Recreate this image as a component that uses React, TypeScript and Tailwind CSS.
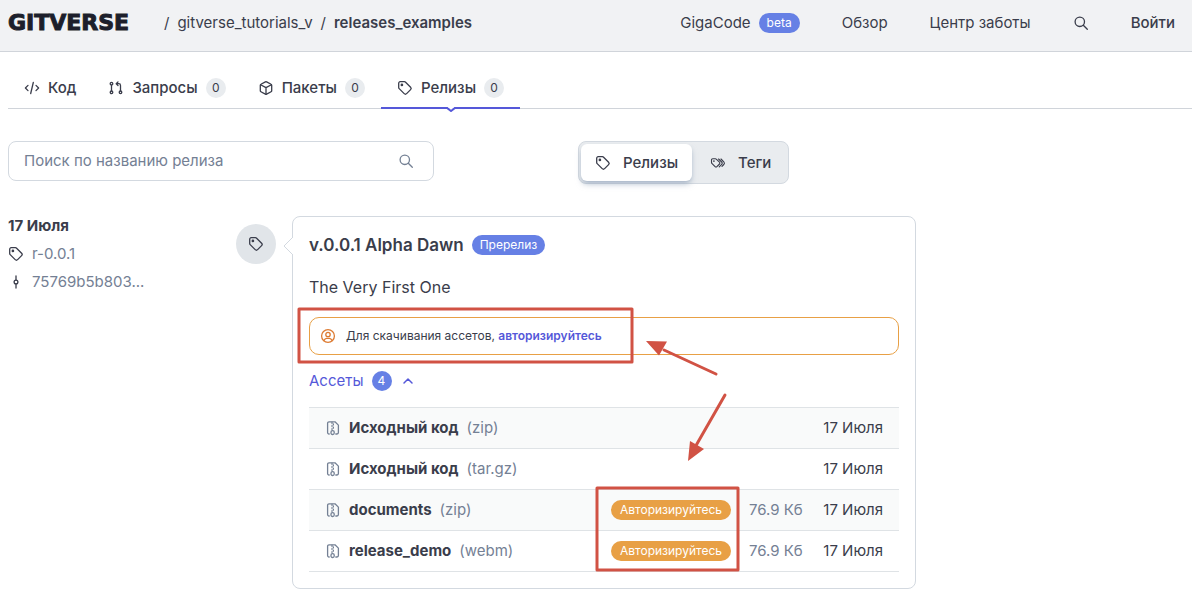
import type { ReactNode } from "react";

type IconProps = { className?: string; children?: ReactNode };

const Icon = ({ className = "size-4", children }: IconProps) => (
  <svg
    className={`${className} shrink-0`}
    viewBox="0 0 16 16"
    fill="none"
    stroke="currentColor"
    strokeWidth="1.3"
    strokeLinecap="round"
    strokeLinejoin="round"
    aria-hidden="true"
  >
    {children}
  </svg>
);

const TagIcon = () => (
  <Icon>
    <path d="M1.700 3.200c0-.9.7-1.500 1.500-1.500h4.200c.5 0 .9.2 1.200.5l5 5c.7.7.7 1.700 0 2.400l-4 4c-.7.7-1.700.7-2.400 0l-5-5a1.700 1.700 0 0 1-.5-1.200Z" />
    <circle cx="4.900" cy="4.900" r=".7" fill="currentColor" />
  </Icon>
);

const TagsIcon = () => (
  <Icon>
    <g strokeWidth="1.1">
      <path d="M1.500 5c0-.6.5-1.200 1.200-1.200h2.700c.4 0 .8.2 1.100.5l3 2.900c.5.5.5 1.300 0 1.800l-2.600 2.600c-.5.5-1.300.5-1.800 0l-3-3a1.700 1.700 0 0 1-.6-1.200Z" />
      <path d="m8.600 4 3.100 3c.7.7.7 1.600 0 2.300l-2.500 2.600M11 4l2.800 2.900c.8.8.8 1.800 0 2.600L12 11.400" />
      <circle cx="3.900" cy="6.100" r=".3" fill="currentColor" />
    </g>
  </Icon>
);

const CodeIcon = () => (
  <Icon>
    <path d="M4 5.400 1.400 8 4 10.600M12 5.400 14.600 8 12 10.600M9.300 2.500 6.700 13.500" />
  </Icon>
);

const PullIcon = () => (
  <Icon>
    <circle cx="3.500" cy="3.700" r="1.300" />
    <circle cx="3.500" cy="12.300" r="1.300" />
    <circle cx="12.500" cy="12.300" r="1.300" />
    <path d="M3.500 5.200v5.600M12.500 10.800V5.500c0-1.200-.6-1.800-1.700-1.800H8.800M10 1.900 8.200 3.700 10 5.500" />
  </Icon>
);

const PackageIcon = () => (
  <Icon>
    <path d="M7.400 1.900c.4-.2.800-.2 1.200 0l4.500 2.400c.4.200.6.600.6 1v5.400c0 .4-.2.8-.6 1l-4.500 2.400c-.4.200-.8.200-1.200 0l-4.500-2.400c-.4-.2-.6-.6-.6-1V5.300c0-.4.2-.8.6-1Z" />
    <path d="M2.600 4.700 8 7.600l5.400-2.900M8 7.600v6.500" />
  </Icon>
);

const SearchIcon = () => (
  <Icon>
    <circle cx="6.800" cy="6.800" r="4.700" />
    <path d="m10.300 10.300 4 4" />
  </Icon>
);

const CommitIcon = () => (
  <Icon>
    <circle cx="8" cy="8" r="1.900" />
    <path d="M8 2v4M8 10v4" />
  </Icon>
);

const UserIcon = () => (
  <Icon>
    <circle cx="8" cy="8" r="6.400" />
    <circle cx="8" cy="6.500" r="2.200" />
    <path d="M3.900 12.600c.7-1.500 1.600-2.200 2.700-2.200h2.800c1.100 0 2 .7 2.700 2.200" />
  </Icon>
);

const ZipIcon = () => (
  <Icon>
    <path
      d="M4.200 14H4c-.8 0-1.400-.6-1.400-1.400V3.200c0-.8.6-1.400 1.400-1.400h6l3.400 3.300v7.500c0 .8-.6 1.400-1.400 1.400h-1.200"
      strokeWidth="1.300"
    />
    <path
      d="M7 2.200v1.200M8.400 3.800V5M7 5.400v1.200M8.400 7v1.200M7 8.600v1"
      strokeWidth="1.200"
    />
    <rect x="6" y="10.600" width="3.200" height="3.900" rx="1.500" />
  </Icon>
);

const ChevronIcon = () => (
  <Icon>
    <path d="m4 10 4-4 4 4" strokeWidth="1.500" />
  </Icon>
);

const tabs = [
  { title: "Код", icon: <CodeIcon /> },
  { title: "Запросы", icon: <PullIcon />, count: 0 },
  { title: "Пакеты", icon: <PackageIcon />, count: 0 },
  { title: "Релизы", icon: <TagIcon />, count: 0, active: true },
];

const assets = [
  { name: "Исходный код", type: "zip", date: "17 Июля" },
  { name: "Исходный код", type: "tar.gz", date: "17 Июля" },
  { name: "documents", type: "zip", size: "76.9 Кб", date: "17 Июля" },
  { name: "release_demo", type: "webm", size: "76.9 Кб", date: "17 Июля" },
];

const Header = () => (
  <header className="flex items-center justify-between border-b border-[#d0d4da] bg-[#f1f2f4] pt-[11px] pr-[17px] pb-4 pl-2">
    <div className="flex items-center gap-2">
      <a
        href="#"
        className="w-[148px] font-['DejaVu_Sans',sans-serif] text-[22px] leading-6 font-bold text-[#1d1f2b] [-webkit-text-stroke:1px_#1d1f2b]"
      >
        GITVERSE
      </a>
      <span>/</span>
      <a href="#">gitverse_tutorials_v</a>
      <span>/</span>
      <a href="#" className="font-semibold">
        releases_examples
      </a>
    </div>
    <nav className="flex items-center gap-[42px]">
      <a href="#" className="flex items-center gap-2">
        GigaCode
        <span className="rounded-full bg-[#6680e5] px-2 text-xs leading-5 text-white">
          beta
        </span>
      </a>
      <a href="#">Обзор</a>
      <a href="#">Центр заботы</a>
      <button type="button" aria-label="Поиск">
        <SearchIcon />
      </button>
      <a href="#" className="font-medium">
        Войти
      </a>
    </nav>
  </header>
);

const Tabs = () => (
  <nav className="mt-4 ml-2 flex border-b border-[#d0d4da] font-medium">
    {tabs.map((tab) => (
      <a
        key={tab.title}
        href="#"
        className="relative flex h-10 items-center gap-2 px-4"
      >
        {tab.icon}
        {tab.title}
        {tab.count !== undefined && (
          <span className="grid size-5 place-items-center rounded-full bg-[#e9ecef] text-xs font-normal">
            {tab.count}
          </span>
        )}
        {tab.active && (
          <span className="absolute inset-x-0 -bottom-px h-0.5 bg-[#5558d9]">
            <svg
              className="absolute top-0 left-1/2 h-[5px] w-3 -translate-x-1/2"
              viewBox="0 0 12 5"
              fill="none"
              aria-hidden="true"
            >
              <path d="M2 0h8L6 3Z" fill="#fff" />
              <path d="M0 1h2l4 3 4-3h2" stroke="#5558d9" strokeWidth="2" />
            </svg>
          </span>
        )}
      </a>
    ))}
  </nav>
);

const Toolbar = () => (
  <div className="mt-8 flex items-start gap-36 px-2">
    <label className="flex h-10 w-[426px] items-center rounded-lg border border-[#d3d9e0] pr-[19px] pl-[15px] text-[#748094]">
      <input
        type="text"
        aria-label="Поиск по названию релиза"
        placeholder="Поиск по названию релиза"
        className="min-w-0 flex-1 outline-none placeholder:text-[#748094]"
      />
      <SearchIcon />
    </label>
    <div className="flex h-[43px] rounded-lg border border-[#d3d9e0] bg-[#e9ecef] p-0.5 font-medium">
      <button
        type="button"
        className="flex items-center gap-3 rounded-md bg-white px-3.5 shadow-md shadow-slate-400/60"
      >
        <TagIcon />
        Релизы
      </button>
      <button
        type="button"
        className="flex items-center gap-3 pr-[15px] pl-[18px]"
      >
        <TagsIcon />
        Теги
      </button>
    </div>
  </div>
);

const Assets = () => (
  <table className="w-full border-collapse">
    <tbody>
      {assets.map((asset) => (
        <tr
          key={asset.name + asset.type}
          className="h-[41px] border-y border-[#dfe3e6] odd:bg-[#f9fafa]"
        >
          <td className="pl-4">
            <div className="flex items-center gap-2">
              <span className="text-[#748094]">
                <ZipIcon />
              </span>
              <a href="#" className="font-bold">
                {asset.name}
              </a>
              <span className="text-[#748094]">({asset.type})</span>
            </div>
          </td>
          <td className="w-[140px] pl-0.5">
            {asset.size && (
              <a
                href="#"
                className="block w-[120px] rounded-full bg-[#e8a045] text-center text-xs leading-5 text-white"
              >
                Авторизируйтесь
              </a>
            )}
          </td>
          <td className="w-[54px] whitespace-nowrap text-[#748094]">
            {asset.size}
          </td>
          <td className="w-24 pr-4 text-right whitespace-nowrap">
            {asset.date}
          </td>
        </tr>
      ))}
    </tbody>
  </table>
);

// Red frames and arrows laid over the release card
const Marks = () => (
  <svg
    className="pointer-events-none absolute top-0 left-0 overflow-visible"
    width="624"
    height="373"
    viewBox="293 217 624 373"
    fill="none"
    stroke="#d15244"
    strokeWidth="3"
    strokeLinecap="round"
    strokeLinejoin="round"
    aria-hidden="true"
  >
    <rect x="299" y="309" width="333" height="53" />
    <rect x="597" y="488" width="141" height="82" />
    <path d="m716 374-52-24M725 395l-31 54" />
    <path
      d="m646 341 21 .5-8 14ZM688 461l2-20 14 8Z"
      fill="#d15244"
      stroke="none"
    />
  </svg>
);

const ReleaseCard = () => (
  <article className="relative max-w-[624px] rounded-lg border border-[#d3d9e0] p-4">
    <svg
      className="absolute top-[19px] -left-[10px] h-5 w-[10px]"
      viewBox="0 0 10 20"
      aria-hidden="true"
    >
      <path d="M10 1 1 10l9 9" fill="#fff" stroke="#d3d9e0" />
    </svg>
    <div className="flex items-center gap-2 pb-0.5">
      <h2 className="text-[17px] leading-6 font-semibold">
        v.0.0.1 Alpha Dawn
      </h2>
      <span className="rounded-full bg-[#6680e5] px-2 text-xs leading-5 text-white">
        Пререлиз
      </span>
    </div>
    <p className="pt-4 pb-[18px] text-base leading-6">The Very First One</p>
    <div className="flex h-[38px] items-center gap-2.5 rounded-[10px] border border-[#e8a045] px-2.5 text-xs">
      <span className="text-[#dd7b32]">
        <UserIcon />
      </span>
      <p>
        Для скачивания ассетов,{" "}
        <a href="#" className="font-semibold text-[#5558d9]">
          авторизируйтесь
        </a>
      </p>
    </div>
    <button
      type="button"
      aria-expanded="true"
      className="my-4 flex items-center gap-2 text-[#5558d9]"
    >
      Ассеты
      <span className="grid size-5 place-items-center rounded-full bg-[#6680e5] text-xs text-white">
        4
      </span>
      <ChevronIcon />
    </button>
    <Assets />
    <Marks />
  </article>
);

const App = () => (
  <div className="bg-white font-[Inter,sans-serif] text-[15px] leading-5 text-[#3a3d4b]">
    <Header />
    <Tabs />
    <main>
      <Toolbar />
      <section className="mt-8 grid grid-cols-[212px_40px_1fr] gap-x-4 px-2 pb-5">
        <div>
          <h3 className="font-bold">17 Июля</h3>
          <a href="#" className="mt-2 flex items-center gap-2">
            <TagIcon />
            <span className="text-[#748094]">r-0.0.1</span>
          </a>
          <a href="#" className="mt-2 flex items-center gap-2">
            <CommitIcon />
            <span className="text-[#748094]">75769b5b803...</span>
          </a>
        </div>
        <div className="mt-2 grid size-10 place-items-center rounded-full bg-[#e1e5e9]">
          <TagIcon />
        </div>
        <ReleaseCard />
      </section>
    </main>
  </div>
);

export default App;
